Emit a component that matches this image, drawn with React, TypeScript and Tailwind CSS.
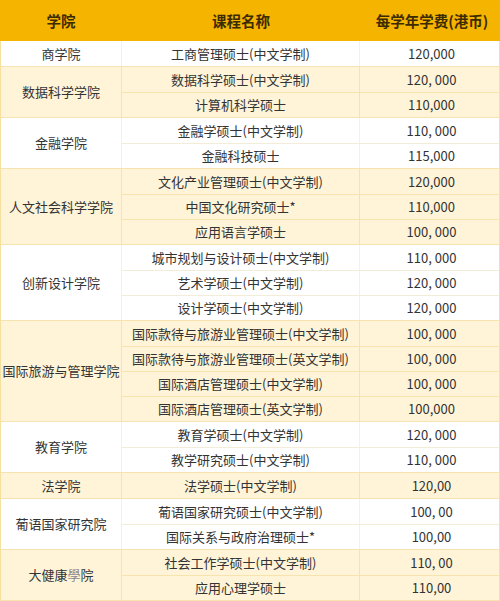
import React from 'react';

type Course = { name: React.ReactNode; fee: string };
type School = { school: React.ReactNode; courses: Course[] };

const data: School[] = [
  { school: '商学院', courses: [{ name: '工商管理硕士(中文学制)', fee: '120,000' }] },
  {
    school: '数据科学学院',
    courses: [
      { name: '数据科学硕士(中文学制)', fee: '120, 000' },
      { name: '计算机科学硕士', fee: '110,000' },
    ],
  },
  {
    school: '金融学院',
    courses: [
      { name: '金融学硕士(中文学制)', fee: '110, 000' },
      { name: '金融科技硕士', fee: '115,000' },
    ],
  },
  {
    school: '人文社会科学学院',
    courses: [
      { name: '文化产业管理硕士(中文学制)', fee: '120,000' },
      { name: '中国文化研究硕士*', fee: '110,000' },
      { name: '应用语言学硕士', fee: '100, 000' },
    ],
  },
  {
    school: '创新设计学院',
    courses: [
      { name: '城市规划与设计硕士(中文学制)', fee: '110, 000' },
      { name: '艺术学硕士(中文学制)', fee: '120, 000' },
      { name: '设计学硕士(中文学制)', fee: '120, 000' },
    ],
  },
  {
    school: '国际旅游与管理学院',
    courses: [
      { name: '国际款待与旅游业管理硕士(中文学制)', fee: '100, 000' },
      { name: '国际款待与旅游业管理硕士(英文学制)', fee: '100, 000' },
      { name: '国际酒店管理硕士(中文学制)', fee: '100, 000' },
      { name: '国际酒店管理硕士(英文学制)', fee: '100,000' },
    ],
  },
  {
    school: '教育学院',
    courses: [
      { name: '教育学硕士(中文学制)', fee: '120, 000' },
      { name: '教学研究硕士(中文学制)', fee: '110, 000' },
    ],
  },
  { school: '法学院', courses: [{ name: '法学硕士(中文学制)', fee: '120,00' }] },
  {
    school: '葡语国家研究院',
    courses: [
      { name: '葡语国家研究硕士(中文学制)', fee: '100, 00' },
      { name: '国际关系与政府治理硕士*', fee: '100,00' },
    ],
  },
  {
    school: (
      <>
        大健康<span className="text-[#8a8a8a]">學</span>院
      </>
    ),
    courses: [
      { name: '社会工作学硕士(中文学制)', fee: '110, 00' },
      { name: '应用心理学硕士', fee: '110,00' },
    ],
  },
];

const font = { fontFamily: '"Noto Sans CJK SC", "Noto Sans", sans-serif' };

export default function App() {
  return (
    <div className="w-[500px] h-[601px] overflow-hidden bg-white" style={font}>
      {/* header */}
      <div className="flex h-[41px] bg-[#f4b400] text-[14.5px] font-semibold text-[#3d2b00]">
        <div className="w-[122px] flex items-center justify-center">学院</div>
        <div className="w-[238px] flex items-center justify-center">课程名称</div>
        <div className="flex-1 flex items-center justify-center pl-1">每学年学费(港币)</div>
      </div>

      <div className="border-x border-[#f5e0a0]">
        {data.map((group, gi) => {
          const cream = gi % 2 === 1;
          const line = cream ? 'border-[#f6e3ad]' : 'border-[#f1f1ee]';
          return (
            <div
              key={gi}
              className={`flex border-b border-[#f6e3ad] text-[13px] text-[#333] ${
                cream ? 'bg-[#fff4d8]' : 'bg-white'
              }`}
            >
              <div className={`w-[121px] flex items-center justify-center border-r ${line}`}>
                {group.school}
              </div>
              <div className="flex-1 flex flex-col">
                {group.courses.map((c, ci) => (
                  <div
                    key={ci}
                    className={`flex h-[25px] ${ci > 0 ? `border-t ${cream ? 'border-[#f6e3ad]' : 'border-[#f3ecd8]'}` : ''}`}
                  >
                    <div className={`w-[238px] flex items-center justify-center border-r ${line}`}>
                      {c.name}
                    </div>
                    <div className="flex-1 flex items-center justify-center pl-[4px]">{c.fee}</div>
                  </div>
                ))}
              </div>
            </div>
          );
        })}
      </div>
    </div>
  );
}
